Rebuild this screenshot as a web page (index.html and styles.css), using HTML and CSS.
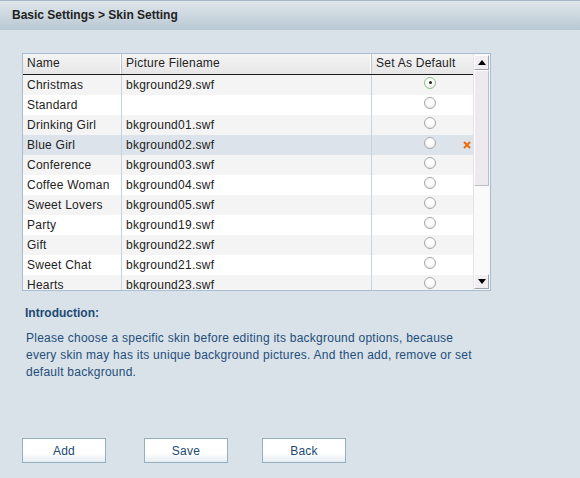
FILE: index.html
```html
<!DOCTYPE html>
<html>
<head>
<meta charset="utf-8">
<link rel="stylesheet" href="styles.css">
</head>
<body>
<div class="titlebar">Basic Settings &gt; Skin Setting</div>
<div class="content">
  <div class="grid">
    <div class="gridmain">
      <div class="row head">
        <div class="c1">Name</div>
        <div class="c2">Picture Filename</div>
        <div class="c3">Set As Default</div>
      </div>
      <div class="body">
        <div class="row alt"><div class="c1">Christmas</div><div class="c2">bkground29.swf</div><div class="c3"><span class="radio on"></span></div></div>
        <div class="row"><div class="c1">Standard</div><div class="c2"></div><div class="c3"><span class="radio"></span></div></div>
        <div class="row alt"><div class="c1">Drinking Girl</div><div class="c2">bkground01.swf</div><div class="c3"><span class="radio"></span></div></div>
        <div class="row sel"><div class="c1">Blue Girl</div><div class="c2">bkground02.swf</div><div class="c3"><span class="radio"></span><svg class="del" width="8" height="8" viewBox="0 0 8 8"><path d="M1 1 L7 7 M7 1 L1 7" stroke="#f26a10" stroke-width="2"/></svg></div></div>
        <div class="row alt"><div class="c1">Conference</div><div class="c2">bkground03.swf</div><div class="c3"><span class="radio"></span></div></div>
        <div class="row"><div class="c1">Coffee Woman</div><div class="c2">bkground04.swf</div><div class="c3"><span class="radio"></span></div></div>
        <div class="row alt"><div class="c1">Sweet Lovers</div><div class="c2">bkground05.swf</div><div class="c3"><span class="radio"></span></div></div>
        <div class="row"><div class="c1">Party</div><div class="c2">bkground19.swf</div><div class="c3"><span class="radio"></span></div></div>
        <div class="row alt"><div class="c1">Gift</div><div class="c2">bkground22.swf</div><div class="c3"><span class="radio"></span></div></div>
        <div class="row"><div class="c1">Sweet Chat</div><div class="c2">bkground21.swf</div><div class="c3"><span class="radio"></span></div></div>
        <div class="row alt"><div class="c1">Hearts</div><div class="c2">bkground23.swf</div><div class="c3"><span class="radio"></span></div></div>
      </div>
    </div>
    <div class="scroll">
      <div class="sbtn"><svg width="8" height="5" viewBox="0 0 8 5"><path d="M0 5 L4 0 L8 5 Z" fill="#000"/></svg></div>
      <div class="thumb"></div>
      <div class="track"></div>
      <div class="sbtn"><svg width="8" height="5" viewBox="0 0 8 5"><path d="M0 0 L8 0 L4 5 Z" fill="#000"/></svg></div>
    </div>
  </div>
  <div class="intro-title">Introduction:</div>
  <p class="intro">Please choose a specific skin before editing its background options, because every skin may has its unique background pictures. And then add, remove or set default background.</p>
  <div class="buttons">
    <button class="btn">Add</button>
    <button class="btn">Save</button>
    <button class="btn">Back</button>
  </div>
</div>
</body>
</html>
```
FILE: styles.css
```css
html, body {
  margin: 0;
  padding: 0;
}
body {
  width: 580px;
  height: 478px;
  background: #d9e1e9;
  font-family: "Liberation Sans", Arial, sans-serif;
  font-size: 12px;
  color: #222;
  overflow: hidden;
  letter-spacing: 0.25px;
}
.titlebar {
  height: 29px;
  border-top: 1px solid #a6b6c6;
  background: linear-gradient(#dfe6ec, #b9c8d2);
  font-weight: bold;
  font-size: 12px;
  color: #222;
  line-height: 29px;
  padding-left: 12px;
  letter-spacing: 0;
}
.content {
  padding: 23px 0 0 22px;
}
.grid {
  width: 467px;
  height: 236px;
  border: 1px solid #a9bed0;
  display: flex;
  background: #fff;
  overflow: hidden;
}
.gridmain {
  width: 450px;
  display: flex;
  flex-direction: column;
}
.row {
  display: flex;
  height: 20px;
  line-height: 20px;
  background: #fff;
}
.row.alt { background: #f4f4f4; }
.row.sel { background: #dce3ea; }
.row > div {
  box-sizing: border-box;
  white-space: nowrap;
  overflow: hidden;
}
.c1 { width: 99px; padding-left: 4px; border-right: 1px solid #c5d3de; }
.c2 { width: 250px; padding-left: 4px; border-right: 1px solid #c5d3de; }
.c3 { width: 101px; position: relative; }
.body .c3 { padding-left: 52px; }
.head {
  height: 20px;
  background: linear-gradient(#f4f4f4, #e6e6e6);
  border-bottom: 1px solid #1a1a1a;
  line-height: 19px;
}
.head .c1, .head .c2 {
  border-right: 1px solid #c4c4c4;
  box-shadow: inset -1px 0 0 #fff;
}
.head .c3 { padding-left: 4px; }
.body {
  flex: 1;
  overflow: hidden;
}
.radio {
  display: inline-block;
  width: 12px;
  height: 12px;
  box-sizing: border-box;
  border-radius: 50%;
  border: 1px solid #a8a8a8;
  background: radial-gradient(circle at 50% 30%, #fff 40%, #e2e2e2 100%);
  vertical-align: middle;
  position: relative;
  top: -3px;
}
.radio.on {
  border-color: #8cc08c;
}
.radio.on::after {
  content: "";
  position: absolute;
  left: 3.5px;
  top: 3.5px;
  width: 3px;
  height: 3px;
  border-radius: 50%;
  background: #222;
}
.del {
  position: absolute;
  right: 2px;
  top: 6px;
}
.scroll {
  width: 17px;
  display: flex;
  flex-direction: column;
  background: #f7f7f7;
  border-left: 1px solid #e4e4e4;
  box-sizing: border-box;
  padding: 1px 1px 1px 0;
}
.sbtn {
  height: 15px;
  background: #f0eef0;
  border: 1px solid #fff;
  border-right-color: #9aa4ae;
  border-bottom-color: #9aa4ae;
  box-sizing: border-box;
  display: flex;
  align-items: center;
  justify-content: center;
}
.thumb {
  height: 116px;
  background: #eee9ef;
  border: 1px solid #fff;
  border-right-color: #b8c0c8;
  border-bottom-color: #b8c0c8;
  box-sizing: border-box;
}
.track {
  flex: 1;
  background: #fafafa;
}
.intro-title {
  margin-top: 15px;
  padding-left: 3px;
  font-weight: bold;
  color: #1c4a72;
  letter-spacing: 0;
}
.intro {
  margin: 10px 0 0 0;
  padding-left: 4px;
  width: 460px;
  line-height: 17px;
  color: #1f4e79;
}
.buttons {
  margin-top: 57px;
  display: flex;
}
.btn {
  width: 84px;
  height: 25px;
  border: 1px solid #94aec2;
  background: linear-gradient(#fff 60%, #e6edf2);
  font-family: "Liberation Sans", Arial, sans-serif;
  font-size: 12px;
  letter-spacing: 0.25px;
  color: #1c4a72;
  padding: 0;
  margin-right: 38px;
}
.btn:nth-child(2) { margin-right: 34px; }
```
